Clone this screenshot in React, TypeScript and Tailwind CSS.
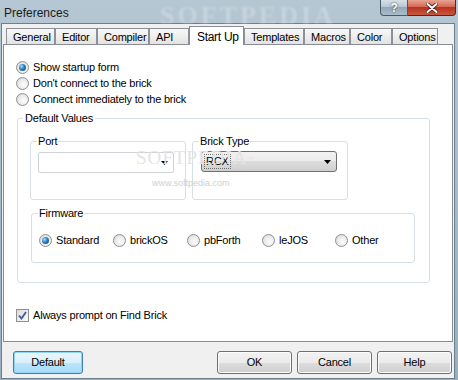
import React from "react"

const font = "font-['Liberation_Sans',Arial,sans-serif]"

const tabs = [
  { name: "General", w: "w-[49px]" },
  { name: "Editor", w: "w-[42px]" },
  { name: "Compiler", w: "w-[52px]" },
  { name: "API", w: "w-[40px]" },
  { name: "Start Up", w: "w-[55px]", active: true },
  { name: "Templates", w: "w-[60px]" },
  { name: "Macros", w: "w-[46px]" },
  { name: "Color", w: "w-[42px]" },
  { name: "Options", w: "w-[46px]" },
]

function Radio({ checked }: { checked?: boolean }) {
  return (
    <span className="w-[13px] h-[13px] shrink-0 rounded-full border border-[#8e8f8f] bg-[radial-gradient(circle_at_60%_60%,#fdfdfd_0%,#e9e9e9_55%,#cfcfcf_100%)] flex items-center justify-center">
      {checked && (
        <span className="w-[7px] h-[7px] rounded-full bg-[radial-gradient(circle_at_35%_35%,#a6dcf8_0%,#2b7fc0_45%,#0b3d78_100%)]" />
      )}
    </span>
  )
}

function RadioRow({ label, checked }: { label: string; checked?: boolean }) {
  return (
    <div className="h-[16px] flex items-center gap-[4px]">
      <Radio checked={checked} />
      <span>{label}</span>
    </div>
  )
}

function Arrow() {
  return (
    <svg width="7" height="4" viewBox="0 0 7 4" className="shrink-0">
      <path d="M0 0 H7 L3.5 4 Z" fill="#000" />
    </svg>
  )
}

function Button({ label, w, primary }: { label: string; w: string; primary?: boolean }) {
  return (
    <div
      className={`${w} h-[23px] rounded-[3px] border flex items-center justify-center ${
        primary
          ? "border-[#3c7fb1] bg-[linear-gradient(#eaf6fd_0%,#d9f0fc_50%,#bee6fd_50%,#a7d9f5_100%)] shadow-[inset_0_0_0_1px_#91d6f7]"
          : "border-[#707070] bg-[linear-gradient(#f2f2f2_0%,#ebebeb_50%,#dddddd_50%,#cfcfcf_100%)] shadow-[inset_0_0_0_1px_#fcfcfc]"
      }`}
    >
      {label}
    </div>
  )
}

export default function App() {
  return (
    <div className={`relative w-[458px] h-[380px] overflow-hidden flex flex-col bg-[linear-gradient(180deg,#b5c7d3_0%,#a4b9c7_60%,#98afbe_100%)] text-[11px] tracking-[-0.2px] text-black ${font}`}>
      {/* title bar */}
      <div className="h-[23px] flex items-start justify-between shrink-0">
        <span className="pl-[4px] pt-[4px] text-[12px] tracking-normal text-[#1b1b1b]">Preferences</span>
        <div className="flex mr-[2px]">
          <div className="w-[28px] h-[16px] rounded-bl-[4px] border border-t-0 border-[#4b5b66] bg-[linear-gradient(#d6e1e8_0%,#b3c5d1_50%,#93a9b8_50%,#a9bdca_100%)] flex items-center justify-center text-white font-bold text-[12px] [text-shadow:0_0_2px_#1f2a33]">
            ?
          </div>
          <div className="w-[48px] h-[16px] rounded-br-[4px] border border-t-0 border-l-0 border-[#4b2a25] bg-[linear-gradient(#e8a493_0%,#d0644f_50%,#b8341f_50%,#c9543c_100%)] flex items-center justify-center">
            <svg width="12" height="10" viewBox="0 0 12 10">
              <path d="M1.5 1 L10.5 9 M10.5 1 L1.5 9" stroke="#4a1a12" strokeWidth="3.6" strokeLinecap="round" />
              <path d="M1.5 1 L10.5 9 M10.5 1 L1.5 9" stroke="#fff" strokeWidth="2" strokeLinecap="round" />
            </svg>
          </div>
        </div>
      </div>

      {/* client area */}
      <div className="flex-1 ml-[1px] mr-[3px] mb-[1px] border border-[#6d7f8c] bg-[#f0f0f0] flex flex-col pl-[1px] pr-[1px]">
        {/* tab strip */}
        <div className="h-[20px] flex items-end pl-[3px] shrink-0">
          {tabs.map((t) =>
            t.active ? (
              <div
                key={t.name}
                className={`${t.w} h-[19px] -mb-[1px] relative z-10 bg-white border border-b-0 border-[#898c95] pl-[7px] pt-[1px] text-[12px] tracking-[-0.3px]`}
              >
                {t.name}
              </div>
            ) : (
              <div
                key={t.name}
                className={`${t.w} h-[16px] border border-b-0 border-[#8d9099] bg-[linear-gradient(#f8f8f8,#e3e3e3)] pl-[6px] flex items-center pt-[1px]`}
              >
                {t.name}
              </div>
            )
          )}
        </div>

        {/* panel */}
        <div className="h-[298px] w-[450px] border border-[#898c95] bg-white flex flex-col shrink-0">
          <div className="pl-[12px] pt-[14px]">
            <RadioRow label="Show startup form" checked />
            <RadioRow label="Don't connect to the brick" />
            <RadioRow label="Connect immediately to the brick" />
          </div>

          <fieldset className="ml-[13px] mt-[5px] w-[413px] h-[171px] border border-[#d5dfe5] rounded-[3px]">
            <legend className="ml-[5px] px-[2px] leading-[13px]">Default Values</legend>
            <div className="flex pl-[12px] mt-[10px]">
              <fieldset className="w-[156px] h-[65px] border border-[#d5dfe5] rounded-[3px]">
                <legend className="ml-[6px] px-[1px] leading-[13px]">Port</legend>
                <div className="ml-[7px] mt-[4px] w-[136px] h-[21px] rounded-[2px] border border-[#cfd3d8] bg-white flex items-center justify-end pr-[5px]">
                  <Arrow />
                </div>
              </fieldset>
              <fieldset className="ml-[6px] w-[156px] h-[65px] border border-[#d5dfe5] rounded-[3px]">
                <legend className="ml-[6px] px-[1px] leading-[13px]">Brick Type</legend>
                <div className="ml-[8px] mt-[3px] w-[136px] h-[21px] rounded-[3px] border border-[#707070] bg-[linear-gradient(#f2f2f2_0%,#ebebeb_50%,#dddddd_50%,#cfcfcf_100%)] flex items-center justify-between pl-[2px] pr-[5px]">
                  <span className="border border-dotted border-[#6e6e6e] px-[1px] leading-[13px]">RCX</span>
                  <Arrow />
                </div>
              </fieldset>
            </div>
            <fieldset className="ml-[13px] mt-[7px] w-[384px] h-[56px] border border-[#d5dfe5] rounded-[3px]">
              <legend className="ml-[6px] px-[1px] leading-[13px]">Firmware</legend>
              <div className="flex pl-[7px] pt-[12px]">
                <div className="w-[74px]"><RadioRow label="Standard" checked /></div>
                <div className="w-[74px]"><RadioRow label="brickOS" /></div>
                <div className="w-[75px]"><RadioRow label="pbForth" /></div>
                <div className="w-[73px]"><RadioRow label="leJOS" /></div>
                <div className="w-[60px]"><RadioRow label="Other" /></div>
              </div>
            </fieldset>
          </fieldset>

          <div className="pl-[12px] mt-[24px] h-[16px] flex items-center gap-[4px]">
            <span className="w-[13px] h-[13px] border border-[#8e8f8f] bg-[linear-gradient(135deg,#dcdcdc,#fbfbfb)] flex items-center justify-center">
              <svg width="9" height="9" viewBox="0 0 9 9">
                <path d="M1 4.5 L3.5 7.5 L8 1" fill="none" stroke="#3d5a99" strokeWidth="1.8" />
              </svg>
            </span>
            <span>Always prompt on Find Brick</span>
          </div>
        </div>

        {/* buttons */}
        <div className="flex items-center mt-[9px] pl-[10px]">
          <Button label="Default" w="w-[70px]" primary />
          <div className="flex gap-[5px] ml-auto mr-[1px]">
            <Button label="OK" w="w-[75px]" />
            <Button label="Cancel" w="w-[75px]" />
            <Button label="Help" w="w-[75px]" />
          </div>
        </div>
      </div>

      {/* softpedia watermarks */}
      <div className="absolute left-[160px] top-[-4px] text-[26px] font-bold tracking-[3px] text-white/25 blur-[1px] font-['Liberation_Serif',serif] pointer-events-none">
        SOFTPEDIA
      </div>
      <div className="absolute left-[136px] top-[144px] text-[19px] tracking-[1px] text-[#e4e4e4] font-['Liberation_Serif',serif] pointer-events-none">
        SOFTPEDIA<sup className="text-[6px]">™</sup>
      </div>
      <div className="absolute left-[152px] top-[177px] text-[9px] tracking-normal text-[#cfcfcf] pointer-events-none">
        www.softpedia.com
      </div>
    </div>
  )
}
